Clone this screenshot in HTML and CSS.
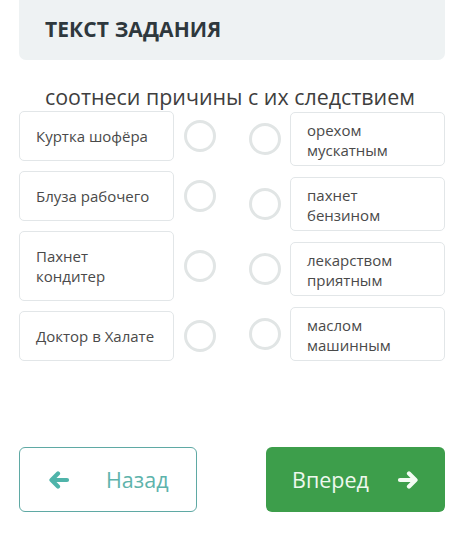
FILE: index.html
```html
<!DOCTYPE html>
<html lang="ru">
<head>
<meta charset="utf-8">
<link rel="stylesheet" href="styles.css">
</head>
<body>
<div class="page">
  <div class="header"><h1 class="title">ТЕКСТ ЗАДАНИЯ</h1></div>
  <p class="subtitle">соотнеси причины с их следствием</p>
  <div class="match">
    <div class="col col-left">
      <div class="row"><div class="card card-left">Куртка шофёра</div><span class="dot"></span></div>
      <div class="row"><div class="card card-left">Блуза рабочего</div><span class="dot"></span></div>
      <div class="row"><div class="card card-left">Пахнет<br>кондитер</div><span class="dot"></span></div>
      <div class="row"><div class="card card-left">Доктор в Халате</div><span class="dot"></span></div>
    </div>
    <div class="col col-right">
      <div class="row"><span class="dot"></span><div class="card card-right">орехом<br>мускатным</div></div>
      <div class="row"><span class="dot"></span><div class="card card-right">пахнет<br>бензином</div></div>
      <div class="row"><span class="dot"></span><div class="card card-right">лекарством<br>приятным</div></div>
      <div class="row"><span class="dot"></span><div class="card card-right">маслом<br>машинным</div></div>
    </div>
  </div>
  <div class="nav">
    <button class="btn btn-back">
      <svg class="arrow" width="22" height="18" viewBox="0 0 22 18"><path d="M19 9H4M10 2.5L3.5 9L10 15.5" fill="none" stroke="currentColor" stroke-width="4.2" stroke-linecap="round" stroke-linejoin="round"/></svg>
      <span>Назад</span>
    </button>
    <button class="btn btn-next">
      <span>Вперед</span>
      <svg class="arrow" width="22" height="18" viewBox="0 0 22 18"><path d="M3 9H18M12 2.5L18.5 9L12 15.5" fill="none" stroke="currentColor" stroke-width="4.2" stroke-linecap="round" stroke-linejoin="round"/></svg>
    </button>
  </div>
</div>
</body>
</html>
```

FILE: styles.css
```css
* { box-sizing: border-box; }
html, body { margin: 0; padding: 0; background: #fff; }
body { font-family: "Open Sans", "Noto Sans", sans-serif; width: 455px; height: 542px; overflow: hidden; }
.page { padding: 0 10px 0 19px; }
.header {
  height: 60px;
  background: #eef2f3;
  border-radius: 0 0 7px 7px;
  display: flex;
  align-items: center;
  padding-left: 26px;
  padding-bottom: 2px;
}
.title { margin: 0; font-size: 21px; font-weight: 700; color: #2e383d; letter-spacing: 0.1px; }
.subtitle {
  margin: 23px 0 0 26px;
  font-size: 21.4px;
  line-height: 28px;
  color: #3e3e3e;
}
.match { display: flex; justify-content: space-between; margin-top: 0; }
.col { display: flex; flex-direction: column; }
.col-left { gap: 10px; }
.col-right { gap: 11px; padding-top: 1px; }
.row { display: flex; align-items: center; }
.col-left .row { gap: 10px; }
.col-right .row { gap: 9px; }
.card {
  width: 155px;
  border: 1px solid #e2e6e8;
  border-radius: 5px;
  font-size: 15px;
  line-height: 20px;
  color: #4a4a4a;
  background: #fff;
}
.card-left { padding: 14px 16px; }
.card-right { padding: 7px 16px 5px; }
.dot {
  width: 32px; height: 32px;
  border: 3px solid #e1e5e5;
  border-radius: 50%;
  flex: none;
}
.nav { display: flex; justify-content: space-between; margin-top: 86px; }
.btn {
  height: 65px;
  border-radius: 6px;
  font-family: inherit;
  font-size: 21.5px;
  display: flex;
  align-items: center;
  cursor: pointer;
}
.btn-back {
  width: 178px;
  background: #fff;
  border: 1px solid #5fa9a4;
  color: #5db3ab;
  padding: 0 0 0 28px;
  gap: 36px;
}
.btn-back .arrow { color: #4fb4aa; }
.btn-next {
  width: 179px;
  background: #3d9e4b;
  border: none;
  color: #eef8ee;
  padding: 0 0 0 26px;
  gap: 28px;
}
.btn-next .arrow { color: #f3fbf3; }
.arrow { flex: none; }
```
